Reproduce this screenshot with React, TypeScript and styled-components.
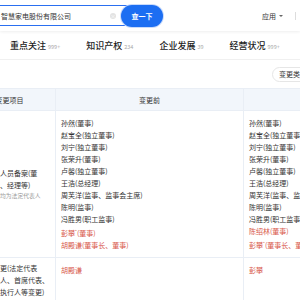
import styled, { createGlobalStyle } from "styled-components";

const GlobalStyle = createGlobalStyle`
  html, body {
    margin: 0;
    padding: 0;
    background: #fff;
    overflow: hidden;
  }
  body {
    font-family: "Noto Sans CJK SC", "Noto Sans", sans-serif;
    color: #333;
  }
`;

const Page = styled.div`
  width: 300px;
  height: 300px;
  overflow: hidden;
  background: #fff;
`;

const TopBar = styled.header`
  height: 31px;
  display: flex;
  align-items: center;
  box-shadow: 0 1px 3px rgba(0, 0, 0, 0.07);
  position: relative;
  z-index: 1;
`;

const SearchBox = styled.div`
  margin-left: -14px;
  width: 177px;
  height: 21px;
  box-sizing: border-box;
  border: 1px solid #2a6ff0;
  border-radius: 11px;
  display: flex;
  align-items: center;
  padding-left: 14px;
`;

const SearchText = styled.span`
  flex: 1;
  font-size: 7px;
  color: #333;
  white-space: nowrap;
`;

const ClearIcon = styled.span`
  width: 6px;
  height: 6px;
  border-radius: 50%;
  background: #e3e3e3;
  color: #fff;
  font-size: 5px;
  line-height: 6px;
  text-align: center;
  margin-right: 5px;
`;

const SearchButton = styled.button`
  height: 22px;
  width: 42px;
  margin-right: -1px;
  border: none;
  border-radius: 11px;
  background: #1c6ef2;
  box-shadow: 0 0 0 1px #c9dbfb;
  color: #fff;
  font-family: inherit;
  font-size: 7px;
  font-weight: 600;
  padding: 0;
`;

const AppMenu = styled.div`
  margin-left: auto;
  display: flex;
  align-items: center;
  gap: 3px;
  font-size: 7px;
  color: #333;
`;

const Caret = styled.span`
  width: 0;
  height: 0;
  border-left: 2px solid transparent;
  border-right: 2px solid transparent;
  border-top: 2px solid #666;
`;

const Divider = styled.span`
  width: 1px;
  height: 8px;
  background: #ddd;
  margin-left: 9px;
  margin-right: 4px;
`;

const Tabs = styled.nav`
  height: 28px;
  display: flex;
  align-items: center;
  gap: 26px;
  padding-left: 10px;
  border-bottom: 1px solid #f0f0f0;
  white-space: nowrap;
`;

const Tab = styled.div`
  font-size: 9px;
  font-weight: 500;
  color: #222;
  display: flex;
  align-items: baseline;
  gap: 2px;
`;

const Count = styled.span`
  font-size: 5.5px;
  font-weight: 400;
  color: #aaa;
`;

const Toolbar = styled.div`
  height: 28px;
  display: flex;
  align-items: center;
  justify-content: flex-end;
`;

const Pill = styled.div`
  height: 15px;
  box-sizing: border-box;
  border: 1px solid #e6e6e6;
  border-radius: 8px;
  padding: 0 6px;
  margin-right: -14px;
  font-size: 7px;
  line-height: 13px;
  color: #333;
  white-space: nowrap;
`;

const Table = styled.div`
  display: grid;
  grid-template-columns: 92px 188px 188px;
  margin-left: -36px;
  border-top: 1px solid #e9eef5;
`;

const HeadCell = styled.div`
  height: 21px;
  background: #f2f6fb;
  font-size: 7px;
  color: #333;
  display: flex;
  align-items: center;
  justify-content: center;
  border-bottom: 1px solid #e9eef5;
  border-right: 1px solid #e9eef5;
`;

const ItemCell = styled.div`
  padding: 4px 6px 4px 36px;
  display: flex;
  flex-direction: column;
  justify-content: center;
  border-bottom: 1px solid #e9eef5;
  border-right: 1px solid #e9eef5;
  font-size: 7px;
  line-height: 12px;
  white-space: nowrap;
`;

const Note = styled.span`
  font-size: 5.8px;
  line-height: 10px;
  color: #999;
`;

const ValueCell = styled.div`
  padding: 6px 5px;
  border-bottom: 1px solid #e9eef5;
  border-right: 1px solid #e9eef5;
  font-size: 7px;
  line-height: 12px;
  white-space: nowrap;
  overflow: hidden;
`;

const Line = styled.div<{ $changed?: boolean }>`
  color: ${(p) => (p.$changed ? "#d8584a" : "#333")};
`;

const Mark = styled.sup`
  font-size: 4px;
  vertical-align: 3px;
`;

type Person = { name: string; mark?: boolean; changed?: boolean };

const before: Person[] = [
  { name: "孙然(董事)" },
  { name: "赵宝全(独立董事)" },
  { name: "刘宁(独立董事)" },
  { name: "张荣升(董事)" },
  { name: "卢馨(独立董事)" },
  { name: "王浩(总经理)" },
  { name: "周芙洋(监事、监事会主席)" },
  { name: "陈明(监事)" },
  { name: "冯胜男(职工监事)" },
  { name: "彭攀", mark: true, changed: true },
  { name: "胡殿谦(董事长、董事)", changed: true },
];

const after: Person[] = [
  { name: "孙然(董事)" },
  { name: "赵宝全(独立董事)" },
  { name: "刘宁(独立董事)" },
  { name: "张荣升(董事)" },
  { name: "卢馨(独立董事)" },
  { name: "王浩(总经理)" },
  { name: "周芙洋(监事、监事会主席)" },
  { name: "陈明(监事)" },
  { name: "冯胜男(职工监事)" },
  { name: "陈绍林(董事)", changed: true },
  { name: "彭攀", mark: true, changed: true },
];

const roleOf = (p: Person, i: number, list: Person[]) => {
  if (!p.mark) return "";
  return list === before ? "(董事)" : "(董事长、董事)";
};

const PeopleList = ({ list }: { list: Person[] }) => (
  <>
    {list.map((p, i) => (
      <Line key={i} $changed={p.changed}>
        {p.name}
        {p.mark && <Mark>*</Mark>}
        {roleOf(p, i, list)}
      </Line>
    ))}
  </>
);

const tabs = [
  { label: "重点关注", count: "999+" },
  { label: "知识产权", count: "234" },
  { label: "企业发展", count: "39" },
  { label: "经营状况", count: "999+" },
];

export default function App() {
  return (
    <Page>
      <GlobalStyle />
      <TopBar>
        <SearchBox>
          <SearchText>智慧家电股份有限公司</SearchText>
          <ClearIcon>×</ClearIcon>
          <SearchButton>查一下</SearchButton>
        </SearchBox>
        <AppMenu>
          应用
          <Caret />
          <Divider />
        </AppMenu>
      </TopBar>
      <Tabs>
        {tabs.map((t) => (
          <Tab key={t.label}>
            {t.label}
            <Count>{t.count}</Count>
          </Tab>
        ))}
      </Tabs>
      <Toolbar>
        <Pill>变更类型</Pill>
      </Toolbar>
      <Table>
        <HeadCell>变更项目</HeadCell>
        <HeadCell>变更前</HeadCell>
        <HeadCell>变更后</HeadCell>

        <ItemCell>
          <span>人员备案(董</span>
          <span>、经理等)</span>
          <Note>均为法定代表人</Note>
        </ItemCell>
        <ValueCell>
          <PeopleList list={before} />
        </ValueCell>
        <ValueCell>
          <PeopleList list={after} />
        </ValueCell>

        <ItemCell>
          <span>更(法定代表</span>
          <span>人、首席代表、</span>
          <span>执行人等变更)</span>
        </ItemCell>
        <ValueCell>
          <Line $changed>胡殿谦</Line>
        </ValueCell>
        <ValueCell>
          <Line $changed>彭攀</Line>
        </ValueCell>
      </Table>
    </Page>
  );
}
